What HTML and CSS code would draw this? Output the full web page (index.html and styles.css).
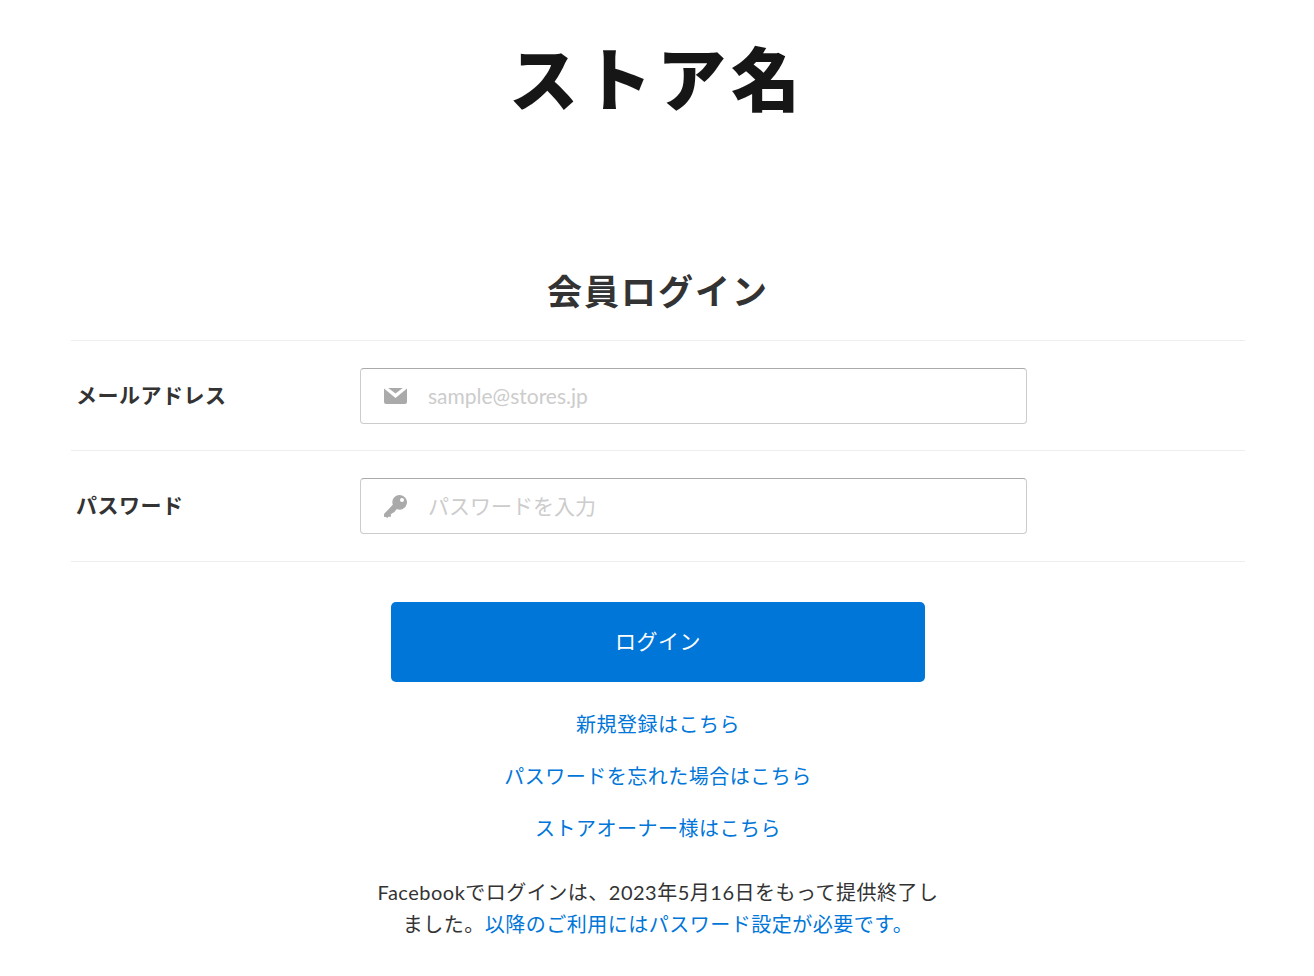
FILE: index.html
```html
<!DOCTYPE html>
<html lang="ja">
<head>
<meta charset="utf-8">
<meta name="viewport" content="width=device-width, initial-scale=1">
<title>会員ログイン</title>
<link rel="stylesheet" href="styles.css">
</head>
<body>
<header class="store"><h1 class="store-name">ストア名</h1></header>
<main class="login">
  <h2 class="login-title">会員ログイン</h2>
  <form class="login-form">
    <div class="row">
      <label class="row-label" for="email">メールアドレス</label>
      <div class="field">
        <svg class="field-icon" viewBox="0 0 23 23" aria-hidden="true"><path d="M4.2 3H18.8L11.5 8.6Z"/><path d="M0 3.6L11.5 13L23 3.6V17Q23 19 21 19H2Q0 19 0 17Z"/></svg>
        <input class="field-input" id="email" type="email" placeholder="sample@stores.jp">
      </div>
    </div>
    <div class="row">
      <label class="row-label" for="password">パスワード</label>
      <div class="field">
        <svg class="field-icon" viewBox="0 0 23 23" aria-hidden="true"><path fill-rule="evenodd" d="M15.7 0A7.3 7.3 0 0 0 8.8 9.8L0 19V21.8L1.3 22H2.2L3 23L4 22.4L4.3 21.8H6.7L7.2 20.2L6.5 19.6L8.6 17.9L10.2 17.2L12.8 14A7.3 7.3 0 1 0 15.7 0ZM18 3A2 2 0 1 1 18 7A2 2 0 0 1 18 3Z"/></svg>
        <input class="field-input" id="password" type="password" placeholder="パスワードを入力">
      </div>
    </div>
    <button class="submit" type="submit">ログイン</button>
  </form>
  <nav class="links">
    <a href="#">新規登録はこちら</a>
    <a href="#">パスワードを忘れた場合はこちら</a>
    <a href="#">ストアオーナー様はこちら</a>
  </nav>
  <p class="notice">Facebookでログインは、2023年5月16日をもって提供終了しました。<a href="#">以降のご利用にはパスワード設定が必要です。</a></p>
</main>
</body>
</html>
```
FILE: styles.css
```css
* { box-sizing: border-box; }
body {
  margin: 0;
  background: #fff;
  color: #333;
  font-family: Lato, "Noto Sans CJK JP", sans-serif;
  font-size: 20px;
  letter-spacing: 0.025em;
}
a { color: #0076d9; text-decoration: none; }
.store { padding: 30px 0 0; text-align: center; }
.store-name {
  margin: 0;
  color: #161616;
  font-size: 69px;
  font-weight: 900;
  line-height: 100px;
  letter-spacing: 5px;
}
.login { margin: 130px 69px 0 71px; }
.login-title {
  margin: 0;
  padding-bottom: 18px;
  border-bottom: 1px solid #eee;
  font-size: 35px;
  font-weight: 700;
  line-height: 62px;
  letter-spacing: 2px;
  text-align: center;
}
.row {
  display: flex;
  align-items: center;
  padding: 27px 0 26px 5px;
  border-bottom: 1px solid #eee;
}
.row:last-of-type { padding-bottom: 27px; }
.row-label {
  flex: 0 0 284px;
  padding-bottom: 4px;
  font-size: 21px;
  font-weight: 700;
}
.field {
  display: flex;
  align-items: center;
  gap: 21px;
  flex: 0 1 667px;
  height: 56px;
  padding: 0 23px;
  border: 1px solid #ccc;
  border-top-color: #aaa;
  border-radius: 4px;
}
.field-icon { width: 23px; height: 23px; flex: none; fill: #aaa; }
.field-input {
  flex: 1;
  min-width: 0;
  padding: 0 0 2px;
  border: 0;
  outline: 0;
  background: none;
  color: #333;
  font: inherit;
  font-size: 21px;
  letter-spacing: 0;
}
.field-input::placeholder { color: #ccc; }
.submit {
  display: block;
  width: 100%;
  max-width: 534px;
  height: 80px;
  margin: 40px auto 0;
  padding: 0 0 5px;
  border: 0;
  border-radius: 5px;
  background: #0076d9;
  color: #fff;
  font: inherit;
  font-size: 21px;
  letter-spacing: inherit;
}
.links {
  display: flex;
  flex-direction: column;
  align-items: center;
  gap: 20px;
  margin-top: 26px;
  line-height: 32px;
}
.notice {
  max-width: 576px;
  margin: 32px auto 0;
  padding-bottom: 32px;
  line-height: 32px;
  text-align: center;
}
```
